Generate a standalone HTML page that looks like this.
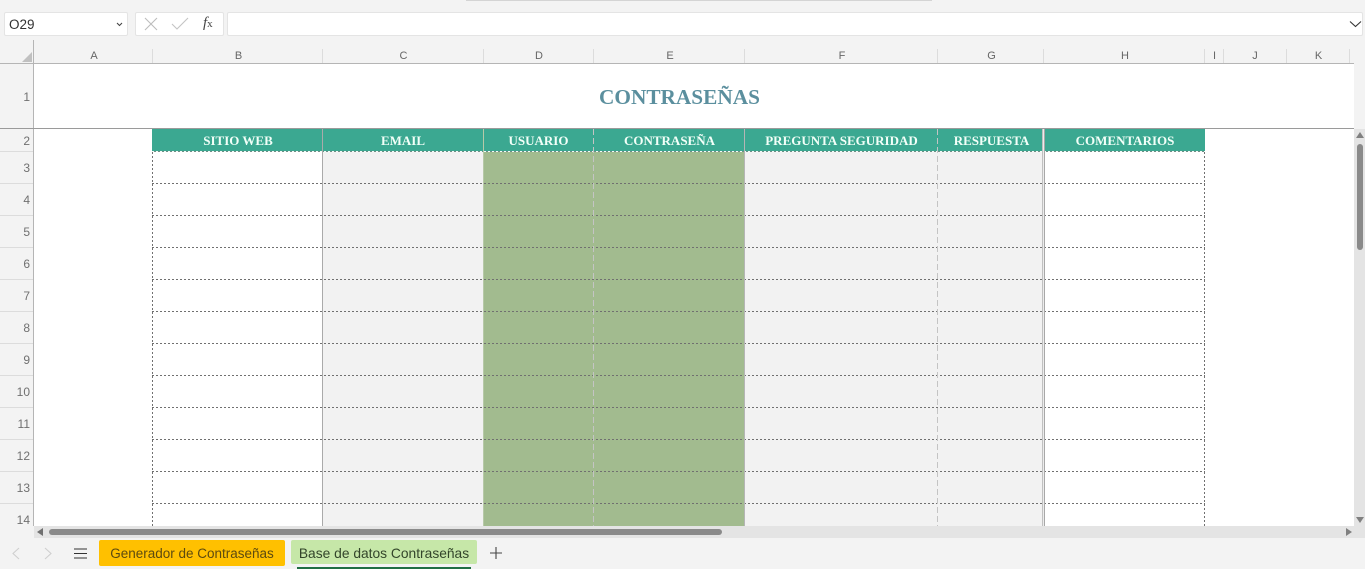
<!DOCTYPE html>
<html lang="es">
<head>
<meta charset="utf-8">
<title>Contraseñas</title>
<style>
html,body{margin:0;padding:0;width:1365px;height:569px;overflow:hidden;background:#f3f3f3;font-family:"Liberation Sans",sans-serif}
div,span,svg{position:absolute;display:block;box-sizing:border-box}
.box{background:#fff;border:1px solid #e4e4e4;border-radius:2px}
.ch{top:49px;height:14px;border-left:1px solid #dcdcdc}
.cl{top:50px;height:13px;font-size:11px;line-height:13px;color:#666;text-align:center}
.rn{left:0;width:30px;text-align:right;font-size:12px;line-height:13px;color:#707070}
.rl{left:0;width:33px;height:1px;background:#dcdcdc}
.th{top:129px;height:23px;background:#3ba891;color:#f2fff8;font:bold 13px/23px "Liberation Serif",serif;text-align:center;white-space:nowrap}
.h{left:152px;width:1053px;height:1px;background:repeating-linear-gradient(90deg,#707070 0 2px,transparent 2px 4px)}
.vd{width:1px;top:152px;height:374px;background:repeating-linear-gradient(180deg,#707070 0 2px,transparent 2px 4px)}
.vl{width:1px;top:129px;height:397px;background:repeating-linear-gradient(180deg,#c4c4c4 0 6px,transparent 6px 9px)}
.vs{width:1px;top:129px;height:397px;background:#aaa}
.tab{top:540px;height:26px;border-radius:2px;font-size:13.5px;line-height:27px;text-align:center;color:#5c4a10;white-space:nowrap}
</style>
</head>
<body>
<!-- top strip -->
<div style="left:466px;top:0;width:466px;height:1px;background:#d4d4d4"></div>

<!-- formula bar -->
<div class="box" style="left:4px;top:12px;width:124px;height:24px"></div>
<div style="left:9px;top:15px;font-size:13.5px;line-height:20px;color:#333">O29</div>
<svg style="left:116px;top:22px" width="7" height="5" viewBox="0 0 7 5"><path d="M1 1l2.500 2.500L6 1" fill="none" stroke="#444" stroke-width="1.1"/></svg>
<div class="box" style="left:135px;top:12px;width:89px;height:24px"></div>
<svg style="left:144px;top:17px" width="14" height="14" viewBox="0 0 14 14"><path d="M1 1l12 12M13 1L1 13" fill="none" stroke="#bdbdbd" stroke-width="1.1"/></svg>
<svg style="left:171px;top:17px" width="18" height="14" viewBox="0 0 18 14"><path d="M1 7l5 5L17 1" fill="none" stroke="#c4c4c4" stroke-width="1.1"/></svg>
<div style="left:203px;top:15px;font:italic 15px/17px 'Liberation Serif',serif;color:#444">f<span style="position:static;display:inline;font-size:11px;font-style:normal">x</span></div>
<div class="box" style="left:227px;top:12px;width:1136px;height:24px"></div>
<svg style="left:1349px;top:20px" width="13" height="8" viewBox="0 0 13 8"><path d="M1 1.500l5.500 5 5.500-5" fill="none" stroke="#333" stroke-width="1.1"/></svg>

<!-- sheet base -->
<div style="left:34px;top:64px;width:1320px;height:462px;background:#fff"></div>
<div style="left:33px;top:40px;width:1px;height:486px;background:#b5b5b5"></div>
<div style="left:0;top:63px;width:1354px;height:1px;background:#b5b5b5"></div>
<svg style="left:21px;top:51px" width="12" height="12" viewBox="0 0 12 12"><path d="M11 1v10H1z" fill="#c0c0c0"/></svg>

<!-- column headers -->
<div class="ch" style="left:152px"></div><div class="ch" style="left:322px"></div><div class="ch" style="left:483px"></div><div class="ch" style="left:593px"></div><div class="ch" style="left:744px"></div><div class="ch" style="left:937px"></div><div class="ch" style="left:1043px"></div><div class="ch" style="left:1204px"></div><div class="ch" style="left:1223px"></div><div class="ch" style="left:1286px"></div><div class="ch" style="left:1349px"></div>
<div class="cl" style="left:35px;width:118px">A</div>
<div class="cl" style="left:153px;width:171px">B</div>
<div class="cl" style="left:323px;width:161px">C</div>
<div class="cl" style="left:484px;width:110px">D</div>
<div class="cl" style="left:594px;width:152px">E</div>
<div class="cl" style="left:745px;width:194px">F</div>
<div class="cl" style="left:938px;width:107px">G</div>
<div class="cl" style="left:1044px;width:162px">H</div>
<div class="cl" style="left:1205px;width:19px">I</div>
<div class="cl" style="left:1224px;width:62px">J</div>
<div class="cl" style="left:1287px;width:63px">K</div>

<!-- row headers -->
<div class="rn" style="top:91px">1</div>
<div class="rn" style="top:135px">2</div>
<div class="rn" style="top:162px">3</div>
<div class="rn" style="top:194px">4</div>
<div class="rn" style="top:226px">5</div>
<div class="rn" style="top:258px">6</div>
<div class="rn" style="top:290px">7</div>
<div class="rn" style="top:322px">8</div>
<div class="rn" style="top:354px">9</div>
<div class="rn" style="top:386px">10</div>
<div class="rn" style="top:418px">11</div>
<div class="rn" style="top:450px">12</div>
<div class="rn" style="top:482px">13</div>
<div class="rn" style="top:514px">14</div>
<div class="rl" style="top:151px"></div><div class="rl" style="top:183px"></div><div class="rl" style="top:215px"></div><div class="rl" style="top:247px"></div><div class="rl" style="top:279px"></div><div class="rl" style="top:311px"></div><div class="rl" style="top:343px"></div><div class="rl" style="top:375px"></div><div class="rl" style="top:407px"></div><div class="rl" style="top:439px"></div><div class="rl" style="top:471px"></div><div class="rl" style="top:503px"></div>

<!-- title -->
<div style="left:34px;top:84px;width:1291px;text-align:center;font:bold 21.3px/26px 'Liberation Serif',serif;color:#5b8f9e;white-space:nowrap">CONTRASEÑAS</div>
<div style="left:0;top:128px;width:1354px;height:1px;background:#9a9a9a"></div>

<!-- column fills -->
<div style="left:323px;top:152px;width:160px;height:374px;background:#f2f2f2"></div>
<div style="left:483px;top:152px;width:262px;height:374px;background:#a2bb8f"></div>
<div style="left:745px;top:152px;width:298px;height:374px;background:#f2f2f2"></div>

<!-- table header -->
<div class="th" style="left:152px;width:172px">SITIO WEB</div>
<div class="th" style="left:323px;width:160px">EMAIL</div>
<div class="th" style="left:483px;width:111px">USUARIO</div>
<div class="th" style="left:593px;width:152px;text-indent:1px">CONTRASEÑA</div>
<div class="th" style="left:744px;width:194px;text-indent:1px">PREGUNTA SEGURIDAD</div>
<div class="th" style="left:937px;width:108px;text-indent:1px">RESPUESTA</div>
<div class="th" style="left:1045px;width:160px">COMENTARIOS</div>

<!-- horizontal lines -->
<div class="h" style="top:151px;background:repeating-linear-gradient(90deg,#f4fbf8 0 2px,#6f8f86 2px 4px)"></div>
<div class="h" style="top:183px"></div><div class="h" style="top:215px"></div><div class="h" style="top:247px"></div><div class="h" style="top:279px"></div><div class="h" style="top:311px"></div><div class="h" style="top:343px"></div><div class="h" style="top:375px"></div><div class="h" style="top:407px"></div><div class="h" style="top:439px"></div><div class="h" style="top:471px"></div><div class="h" style="top:503px"></div>

<!-- vertical lines -->
<div class="vd" style="left:152px"></div>
<div class="vs" style="left:322px"></div>
<div class="vs" style="left:483px;background:#b7c9a8"></div>
<div class="vl" style="left:593px"></div>
<div class="vs" style="left:744px;background:#b5b5b5"></div>
<div class="vl" style="left:937px"></div>
<div class="vs" style="left:1042px;background:#c0c0c0"></div>
<div class="vs" style="left:1043px;background:#ececec"></div>
<div class="vs" style="left:1044px;background:#a8a8a8"></div>
<div class="vd" style="left:1204px"></div>

<!-- vertical scrollbar -->
<div style="left:1354px;top:129px;width:11px;height:397px;background:#e4e4e4"></div>
<div style="left:1354px;top:64px;width:11px;height:64px;background:#f3f3f3"></div>
<svg style="left:1355px;top:131px" width="10" height="8" viewBox="0 0 10 8"><path d="M5 1l4 6H1z" fill="#808080"/></svg>
<div style="left:1357px;top:144px;width:6px;height:106px;background:#8a8a8a;border-radius:3px"></div>
<svg style="left:1355px;top:516px" width="10" height="8" viewBox="0 0 10 8"><path d="M1 1h8L5 7z" fill="#808080"/></svg>

<!-- horizontal scrollbar -->
<div style="left:34px;top:526px;width:1331px;height:12px;background:#e4e4e4"></div>
<svg style="left:36px;top:527px" width="8" height="10" viewBox="0 0 8 10"><path d="M7 1v8L1 5z" fill="#707070"/></svg>
<div style="left:49px;top:529px;width:673px;height:6px;background:#8a8a8a;border-radius:3px"></div>
<svg style="left:1345px;top:527px" width="8" height="10" viewBox="0 0 8 10"><path d="M1 1v8l6-4z" fill="#808080"/></svg>

<!-- tab bar -->
<svg style="left:11px;top:547px" width="10" height="13" viewBox="0 0 10 13"><path d="M8 1L2 6.500 8 12" fill="none" stroke="#cfcfcf" stroke-width="1.1"/></svg>
<svg style="left:43px;top:547px" width="10" height="13" viewBox="0 0 10 13"><path d="M2 1l6 5.500L2 12" fill="none" stroke="#cfcfcf" stroke-width="1.1"/></svg>
<svg style="left:74px;top:548px" width="13" height="11" viewBox="0 0 13 11"><path d="M0 1h13M0 5.500h13M0 10h13" fill="none" stroke="#333" stroke-width="1.1"/></svg>
<div class="tab" style="left:99px;width:186px;background:#ffc000">Generador de Contraseñas</div>
<div class="tab" style="left:291px;width:186px;height:24px;background:#c6e7a8;color:#33452a;font-size:13.8px">Base de datos Contraseñas</div>
<div style="left:297px;top:567px;width:174px;height:2px;background:#1f6e43"></div>
<svg style="left:490px;top:547px" width="12" height="12" viewBox="0 0 12 12"><path d="M6 0v12M0 6h12" fill="none" stroke="#444" stroke-width="1.1"/></svg>
</body>
</html>
